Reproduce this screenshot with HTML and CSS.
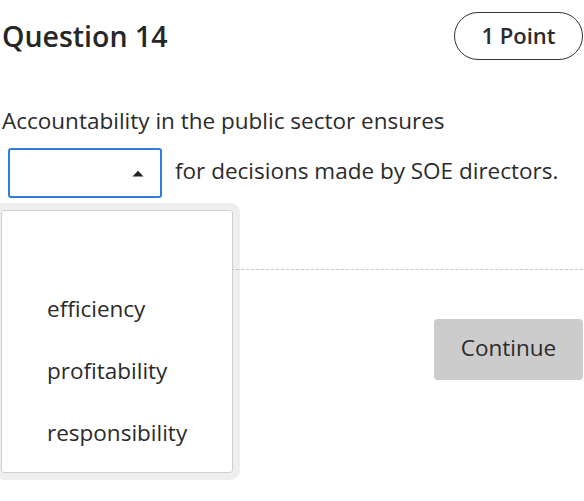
FILE: index.html
```html
<!DOCTYPE html>
<html lang="en">
<head>
<meta charset="utf-8">
<link rel="stylesheet" href="styles.css">
</head>
<body>
<div class="page">
  <header class="head">
    <h1 class="title">Question 14</h1>
    <span class="points">1 Point</span>
  </header>
  <p class="prompt">Accountability in the public sector ensures</p>
  <div class="blank-row">
    <div class="select-wrap">
      <div class="select">
        <svg class="caret" width="12" height="7" viewBox="0 0 12 7"><path d="M0.5 6.5 L6 0.8 L11.5 6.5 Z" fill="#222"/></svg>
      </div>
      <div class="menu">
        <ul class="options">
          <li class="option">efficiency</li>
          <li class="option">profitability</li>
          <li class="option">responsibility</li>
        </ul>
      </div>
    </div>
    <span class="tail">for decisions made by SOE directors.</span>
  </div>
  <hr class="divider">
  <div class="actions">
    <button class="continue">Continue</button>
  </div>
</div>
</body>
</html>
```

FILE: styles.css
```css
html, body {
  margin: 0;
  padding: 0;
  background: #fff;
}
body {
  font-family: "Open Sans", "Noto Sans", sans-serif;
  color: #2b2b2b;
  min-height: 501px;
}
.page {
  width: 584px;
  min-height: 501px;
  padding: 12px 1px 0 2px;
  box-sizing: border-box;
}
.head {
  display: flex;
  justify-content: space-between;
  align-items: center;
  height: 48px;
}
.title {
  margin: 0;
  font-size: 28.5px;
  font-weight: 600;
  color: #262626;
}
.points {
  box-sizing: border-box;
  height: 48px;
  width: 129px;
  border: 1.5px solid #333;
  border-radius: 24px;
  display: flex;
  align-items: center;
  justify-content: center;
  font-size: 22px;
  font-weight: 600;
  color: #2b2b2b;
  padding-bottom: 2px;
}
.prompt {
  margin: 46px 0 0 0;
  font-size: 22.5px;
  line-height: 30px;
  color: #2b2b2b;
}
.blank-row {
  display: flex;
  align-items: center;
  margin-top: 12px;
}
.select-wrap {
  position: relative;
  margin-left: 6px;
}
.select {
  box-sizing: border-box;
  width: 154px;
  height: 50px;
  border: 2px solid #2f7fd9;
  border-radius: 3px;
  display: flex;
  align-items: center;
  justify-content: flex-end;
  padding-right: 16px;
}
.caret {
  display: block;
}
.tail {
  margin-left: 13px;
  font-size: 22.5px;
  line-height: 30px;
  color: #2b2b2b;
  padding-bottom: 4px;
}
.menu {
  position: absolute;
  left: -14px;
  top: 55px;
  width: 232px;
  height: 263px;
  border: 7px solid rgba(0, 0, 0, 0.065);
  border-radius: 9px;
  z-index: 2;
}
.options {
  list-style: none;
  margin: 0;
  padding: 67px 0 0 0;
  height: 100%;
  box-sizing: border-box;
  background: #fff;
  border: 1px solid #cfcfcf;
  border-radius: 3px;
}
.option {
  height: 62px;
  line-height: 62px;
  padding-left: 45px;
  font-size: 22.5px;
  color: #2b2b2b;
}
.divider {
  border: 0;
  border-top: 1px dashed #c8c8c8;
  margin: 71px 0 0 0;
}
.actions {
  display: flex;
  justify-content: flex-end;
  margin-top: 49px;
}
.continue {
  width: 149px;
  height: 61px;
  border: 0;
  border-radius: 4px;
  background: #cccccc;
  font-family: inherit;
  font-size: 22.5px;
  color: #2b2b2b;
  padding: 0 0 4px 0;
}
```
